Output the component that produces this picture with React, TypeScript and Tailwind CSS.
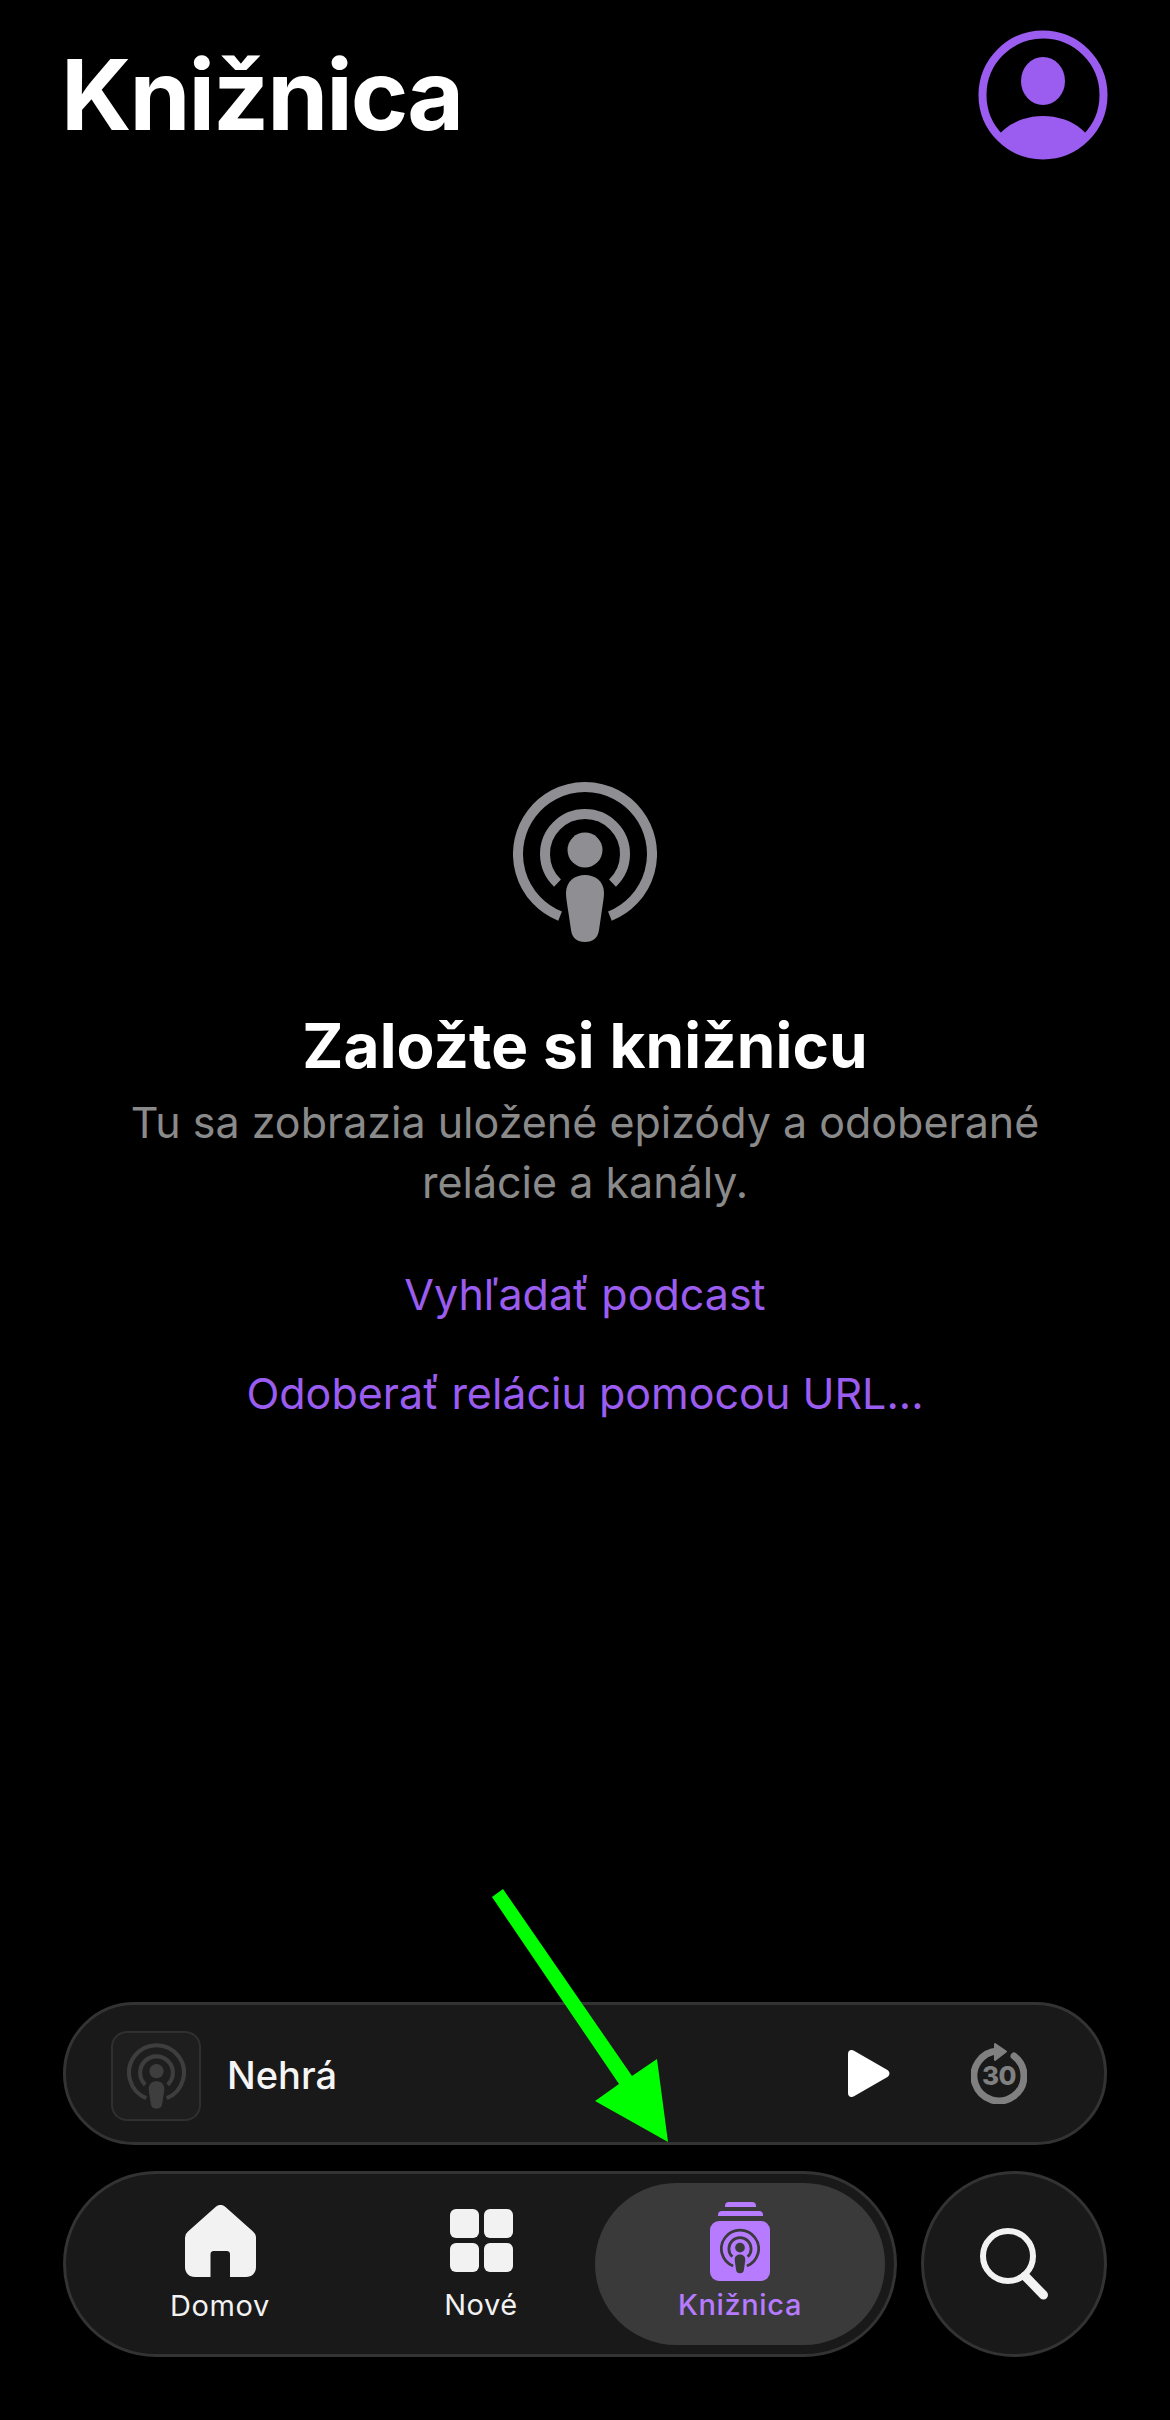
const purple = "#9b5cf0";

// Broadcast mark: two open rings, a head and a tapered body, on a 144x160 grid.
function PodcastGlyph({ color, className }: { color: string; className?: string }) {
  return (
    <svg viewBox="0 0 144 160" className={className} fill="none">
      <path d="M47.1 134.2A67 67 0 1 1 96.9 134.2" stroke={color} strokeWidth="10" />
      <path d="M44.5 101.1A40 40 0 1 1 99.5 101.1" stroke={color} strokeWidth="10" />
      <circle cx="72" cy="68" r="17.5" fill={color} />
      <path
        d="M72 93c10 0 19 6 19 18c0 4-1 10-2.5 20l-2.5 17c-1 8-6 12-14 12s-13-4-14-12l-2.5-17c-1.5-10-2.500-16-2.500-20c0-12 9-18 19-18z"
        fill={color}
      />
    </svg>
  );
}

function Avatar() {
  return (
    <svg viewBox="0 0 130 130" className="h-[130px] w-[130px]">
      <defs>
        <clipPath id="avatar-disc">
          <circle cx="65" cy="65" r="62" />
        </clipPath>
      </defs>
      <circle cx="65" cy="65" r="60.5" fill="none" stroke={purple} strokeWidth="8" />
      <ellipse cx="65" cy="51" rx="22" ry="24" fill={purple} />
      <ellipse cx="65" cy="130" rx="54" ry="44" fill={purple} clipPath="url(#avatar-disc)" />
    </svg>
  );
}

function HomeIcon() {
  return (
    <svg viewBox="0 0 71 72" className="h-[72px] w-[71px]">
      <path
        d="M30.5 2a7 7 0 0 1 10 0L68 26.5a8 8 0 0 1 3 6.5V62c0 6-4 10-10 10H45V49c0-2-1.500-3-3-3H28.500c-1.500 0-3 1-3 3V72H10C4 72 0 68 0 62V33a8 8 0 0 1 3-6.500z"
        fill="#f2f2f2"
      />
    </svg>
  );
}

function GridIcon() {
  return (
    <div className="grid h-[63px] w-[63px] grid-cols-2 gap-[5px]">
      <span className="rounded-[6px] bg-[#f2f2f2]" />
      <span className="rounded-[6px] bg-[#f2f2f2]" />
      <span className="rounded-[6px] bg-[#f2f2f2]" />
      <span className="rounded-[6px] bg-[#f2f2f2]" />
    </div>
  );
}

function LibraryIcon() {
  return (
    <div className="flex flex-col items-center">
      <span className="h-[5px] w-[31px] rounded-t-[4px] bg-[#b67bff]" />
      <span className="mt-[4px] h-[5px] w-[45px] rounded-t-[4px] bg-[#b67bff]" />
      <span className="mt-[5px] flex h-[60px] w-[60px] items-center justify-center rounded-[9px] bg-[#b67bff]">
        <PodcastGlyph color="#3a3a3a" className="h-[46px] w-[40px]" />
      </span>
    </div>
  );
}

function ReplayThirty() {
  return (
    <div className="relative flex h-[61px] w-[56px] items-end justify-center">
      <svg viewBox="0 0 56 61" className="absolute inset-0 h-full w-full" fill="none">
        <path d="M43 13A25 25 0 1 1 27 8" stroke="#808080" strokeWidth="7" strokeLinecap="round" />
        <path d="M24 1L35 8.500L24 17z" fill="#808080" stroke="#808080" strokeWidth="2" strokeLinejoin="round" />
      </svg>
      <span className="relative mb-[13px] text-[26px] leading-[30px] font-extrabold tracking-[-0.5px] text-[#808080]">30</span>
    </div>
  );
}

function TabLabel({ children, active }: { children: string; active?: boolean }) {
  return (
    <span
      className={
        active
          ? "text-[29px] leading-[36px] font-medium tracking-[0.6px] text-[#b67bff]"
          : "text-[29px] leading-[36px] font-normal tracking-[0.6px] text-[#f2f2f2]"
      }
    >
      {children}
    </span>
  );
}

export default function App() {
  return (
    <div
      className="relative flex h-[2420px] w-[1170px] flex-col overflow-hidden bg-black"
      style={{ fontFamily: "Inter, 'Noto Sans', sans-serif" }}
    >
      <header className="flex items-start justify-between pt-[30px] pr-[62px] pl-[61px]">
        <h1 className="text-[98px] leading-[130px] font-bold tracking-[-2px] text-white">Knižnica</h1>
        <Avatar />
      </header>

      <main className="flex flex-col items-center pt-[622px]">
        <PodcastGlyph color="#8e8e93" className="h-[160px] w-[144px]" />
        <h2 className="mt-[66px] text-[62px] leading-[76px] font-bold tracking-[0.1px] text-white">Založte si knižnicu</h2>
        <p className="mt-[8px] w-[960px] text-center text-[43px] leading-[60px] text-[#8a8a8a]">
          Tu sa zobrazia uložené epizódy a odoberané relácie a kanály.
        </p>
        <a className="mt-[52px] text-[43px] leading-[60px]" style={{ color: purple }}>
          Vyhľadať podcast
        </a>
        <a className="mt-[39px] text-[43px] leading-[60px]" style={{ color: purple }}>
          Odoberať reláciu pomocou URL...
        </a>
      </main>

      <section className="mt-auto flex flex-col gap-[26px] pr-[63px] pb-[63px] pl-[63px]">
        <div className="flex h-[143px] items-center rounded-full border-[3px] border-[#333333] bg-[#191919] pr-[77px] pl-[45px]">
          <span className="mt-[4px] flex h-[90px] w-[90px] items-center justify-center rounded-[16px] border-2 border-[#303030] bg-[#1e1e1e]">
            <PodcastGlyph color="#3e3e3e" className="h-[66px] w-[59px]" />
          </span>
          <span className="ml-[26px] pt-[3px] text-[38px] font-medium text-[#f5f5f5]">Nehrá</span>
          <svg viewBox="0 0 42 47" className="mr-[81px] ml-auto h-[47px] w-[42px]">
            <path d="M0 4c0-3.500 3-5 6-3.300l33 19c3.300 1.900 3.300 5.700 0 7.600l-33 19C3 48 0 46.500 0 43z" fill="#fff" />
          </svg>
          <ReplayThirty />
        </div>

        <div className="flex gap-[24px]">
          <nav className="flex h-[186px] w-[834px] items-center rounded-full border-[3px] border-[#333333] bg-[#191919] pr-[9px] pl-[79px]">
            <div className="flex w-[150px] flex-col items-center gap-[11px]">
              <HomeIcon />
              <TabLabel>Domov</TabLabel>
            </div>
            <div className="ml-[136px] flex w-[100px] flex-col items-center gap-[15px] pt-[4px]">
              <GridIcon />
              <TabLabel>Nové</TabLabel>
            </div>
            <div className="ml-auto flex h-[162px] w-[290px] flex-col items-center justify-center gap-[6px] rounded-full bg-[#3a3a3a] pb-[3px]">
              <LibraryIcon />
              <TabLabel active>Knižnica</TabLabel>
            </div>
          </nav>
          <button className="flex h-[186px] w-[186px] items-center justify-center rounded-full border-[3px] border-[#333333] bg-[#191919]">
            <svg viewBox="0 0 68 72" className="h-[72px] w-[68px]" fill="none" stroke="#f2f2f2">
              <circle cx="28" cy="28" r="25" strokeWidth="6" />
              <path d="M45 48L63.500 67" strokeWidth="9" strokeLinecap="round" />
            </svg>
          </button>
        </div>
      </section>

      {/* Callout arrow pointing at the library tab */}
      <svg viewBox="0 0 1170 2420" className="pointer-events-none absolute inset-0 h-full w-full">
        <polygon
          points="492,1897 503,1889 632,2076 657,2059 668,2142 595,2101 619,2084"
          fill="#00ff00"
        />
      </svg>
    </div>
  );
}
